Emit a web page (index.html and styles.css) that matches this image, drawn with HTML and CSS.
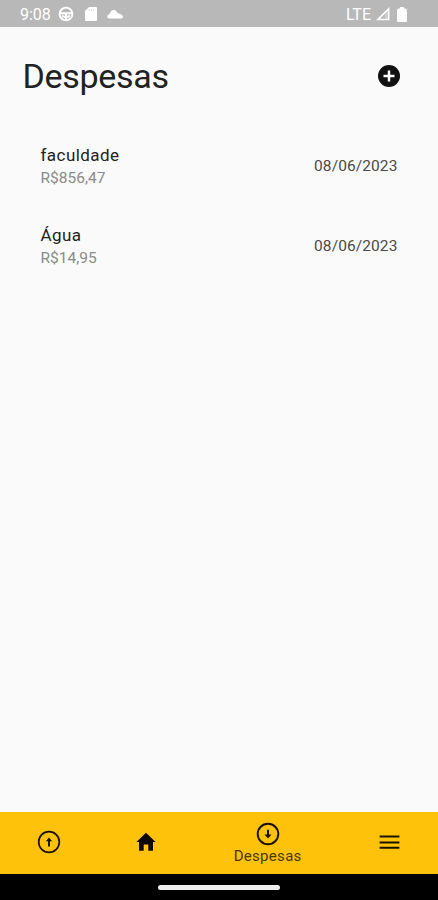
FILE: index.html
```html
<!DOCTYPE html>
<html lang="pt-BR">
<head>
<meta charset="utf-8">
<title>Despesas</title>
<link rel="stylesheet" href="styles.css">
</head>
<body>
<div class="status">
  <div class="status-left">
    <span class="clock">9:08</span>
    <svg class="wheel" width="16" height="16" viewBox="0 0 16 16" fill="none" stroke="#fff" stroke-width="1.9"><circle cx="8" cy="8" r="6.4"/><path d="M2 7.2h12M8 8v6M4 10l3 1M12 10l-3 1"/></svg>
    <svg class="card" width="12" height="14" viewBox="0 0 12 14" fill="#fff"><path d="M4 0h7q1 0 1 1v12q0 1-1 1H1q-1 0-1-1V4z"/><path d="M4.200 2v2M6.500 2v2M8.800 2v2" stroke="#d8d8d8" stroke-width=".8"/></svg>
    <svg class="cloud" width="16" height="10" viewBox="0 0 16 10" fill="#fff"><path d="M2.300 9.500C-.4 9.300-.4 6 2 5.400 3.400 4.600 3.600 1 6.500 1 9.500 1 9.600 3.600 11.500 4.600 14 5 16 6.200 16 8q0 1.500-2.300 1.500z"/></svg>
  </div>
  <div class="status-right">
    <span class="network">LTE</span>
    <svg class="signal" width="14" height="14" viewBox="0 0 14 14"><path d="M1.800 12.600 12.700 1.700v10.900z" fill="none" stroke="#fff" stroke-width="1.500"/><path d="M9 6v6h3.500V2.500z" fill="#fff" opacity=".3"/></svg>
    <svg class="battery" width="10" height="15" viewBox="0 0 10 15" fill="#fff"><path d="M3 0h4v1.500h1.500Q10 2 10 3.500V14q0 1-1 1H1q-1 0-1-1V3.500Q0 2 1.500 1.500H3z"/></svg>
  </div>
</div>
<header class="header">
  <h1>Despesas</h1>
  <svg class="add" width="22" height="22" viewBox="0 0 22 22"><circle cx="11" cy="11" r="11" fill="#111"/><path d="M11 5.500v11M5.500 11h11" stroke="#fff" stroke-width="2.500"/></svg>
</header>
<main class="list">
  <div class="item">
    <div><div class="name">faculdade</div><div class="price">R$856,47</div></div>
    <div class="date">08/06/2023</div>
  </div>
  <div class="item">
    <div><div class="name">Água</div><div class="price">R$14,95</div></div>
    <div class="date">08/06/2023</div>
  </div>
</main>
<nav class="nav">
  <div class="tab"><svg width="24" height="24" viewBox="0 0 24 24"><circle cx="12" cy="12" r="10.300" fill="none" stroke="#1a1200" stroke-width="1.700"/><path d="M12 7.500 15.200 11.200H13V16.500H11V11.200H8.800z" fill="#1a1200"/></svg></div>
  <div class="tab"><svg width="24" height="24" viewBox="0 0 24 24"><path d="M12 2.800 21.600 12H19V20.700H14.300V14.500H9.700V20.700H5V12H2.400z" fill="#0c0800"/></svg></div>
  <div class="tab active"><svg width="24" height="24" viewBox="0 0 24 24"><circle cx="12" cy="12" r="10.300" fill="none" stroke="#1a1200" stroke-width="1.900"/><path d="M12 16.500 8.500 12.600H11V7.800H13V12.600H15.500z" fill="#1a1200"/></svg><span>Despesas</span></div>
  <div class="tab"><svg width="24" height="24" viewBox="0 0 24 24"><path d="M2.600 6.500h19.800M2.600 12.500h19.800M2.600 17.800h19.800" stroke="#1a1200" stroke-width="2"/></svg></div>
</nav>
<div class="system"><div class="pill"></div></div>
</body>
</html>
```
FILE: styles.css
```css
* { box-sizing: border-box; }
body {
  margin: 0;
  height: 900px;
  display: flex;
  flex-direction: column;
  overflow: hidden;
  background: #fafafa;
  color: #222;
  font-family: Roboto, "Liberation Sans", sans-serif;
}
svg { display: block; flex: none; }
.status {
  height: 27px;
  flex: none;
  display: flex;
  justify-content: space-between;
  padding: 1px 31px 0 20px;
  background: #b8b8b8;
  color: #fff;
}
.status-left, .status-right { display: flex; align-items: center; }
.clock { width: 38px; font-size: 16px; line-height: 26px; padding-top: 1px; }
.card { margin-left: 11px; }
.cloud { margin-left: 10px; }
.network { font-size: 16px; margin-right: 5px; }
.battery { margin-left: 7px; }
.header {
  height: 99px;
  flex: none;
  display: flex;
  align-items: center;
  justify-content: space-between;
  padding: 0 38px 0 22.500px;
}
h1 { margin: 0 0 2px; font-size: 34px; font-weight: 380; line-height: 40px; letter-spacing: -.3px; }
.add { margin-bottom: 1px; }
.list { flex: 1; }
.item {
  height: 80px;
  display: flex;
  align-items: center;
  justify-content: space-between;
  padding: 0 40.500px 0 40.500px;
}
.name { font-size: 17px; line-height: 24px; letter-spacing: .45px; }
.price { font-size: 15.500px; line-height: 22px; color: #8a8a8a; letter-spacing: 0; }
.date { font-size: 15.500px; line-height: 20px; color: #4a4a4a; letter-spacing: .1px; }
h1 { font-weight: 400; }
.nav {
  height: 62.500px;
  flex: none;
  display: flex;
  background: #ffc20b;
  color: #4a3800;
}
.tab { flex: 2; display: flex; flex-direction: column; align-items: center; justify-content: center; padding-bottom: 2.500px; }
.tab.active { flex: 3; padding: 2px 0 0; }
.tab span { font-size: 15px; line-height: 20px; letter-spacing: .3px; }
.system { height: 26px; flex: none; display: flex; justify-content: center; background: #000; }
.pill { width: 122px; height: 5px; margin-top: 10.500px; border-radius: 3px; background: #eee; }
```
